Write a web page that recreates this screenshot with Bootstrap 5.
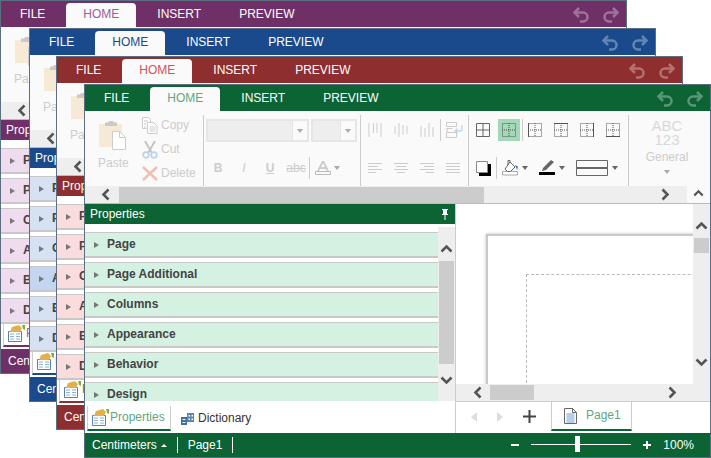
<!DOCTYPE html>
<html lang="en">
<head>
<meta charset="utf-8">
<title>Report designer themes</title>
<link rel="stylesheet" href="https://cdn.jsdelivr.net/npm/bootstrap@5.3.0/dist/css/bootstrap.min.css">
<style>
html,body{margin:0;width:711px;height:458px;overflow:hidden;background:#fff;font:12px/1.2 "Liberation Sans",Arial,sans-serif;color:#444}
svg{display:block;flex:none}
.th-purple{--tc:#6f3068;--ta:#9c5f96;--rw:#f0dcef;--rs:#e6c6e4}
.th-blue{--tc:#1a4a8c;--ta:#1a4a8c;--rw:#d6e1f3;--rs:#c3d6f1}
.th-red{--tc:#8f2e2f;--ta:#d4525a;--rw:#fbdcdc;--rs:#f8c8c8}
.th-green{--tc:#0c6435;--ta:#5fa683;--rw:#d5f1e2;--rs:#bde6cf}
.dsk{width:627px;height:374px;border:1px solid #5d6e80;background:#fff}
.dsk-a{left:0;top:0}.dsk-b{left:29px;top:28px}.dsk-c{left:56px;top:56px}.dsk-d{left:84px;top:84px}
.tbar{height:26px;background:var(--tc);color:#fff}
.tb-i{height:24px;margin-top:2px;line-height:23px;font-size:12px}
.tb-1{padding:0 21px 0 19px}
.tb-2{width:70px;text-align:center;background:#fafafa;color:var(--ta);border-radius:4px 4px 0 0}
.tb-3{padding:0 19px 0 21px}
.tb-4{padding:0 20px 0 19px}
.uhist{margin-right:6px;gap:14px;color:#fff;opacity:.32}
.rib{height:75px;background:#fafafa;color:#ccc}
.rgrp{height:71px;margin-top:4px;border-right:1px solid #ccc;flex:none}
.g-clip{width:119px}.g-font{width:157px}.g-al{width:108px;padding-left:1px}.g-bd{width:160px;padding-left:1px}.g-num{width:76px;border:0}
.pastec{width:55px;padding:6px 0 0 14px}
.pastec span{display:block;margin:6px 0 0 -1px}
.smalls{padding-top:2px;gap:7px;margin-left:2px}
.smalls>div{height:17px;gap:3px}
.rrow{height:22px}
.rr-1{margin-top:4px}.rr-2{margin-top:16px}
.rr-p{padding-left:1px}
.cmb{height:23px;background:#eee;border:2px solid #e6e6e6;justify-content:flex-end}
.cmb i{display:flex;align-items:center;justify-content:center;width:15px;height:100%;background:#fafafa;border-left:1px solid #e6e6e6}
.cw-1{width:103px;margin-left:2px}.cw-2{width:46px;margin-left:2px}
.cell{width:26px;height:22px;flex:none;display:flex;align-items:center;justify-content:center}
.fmt{font:bold 12px/1 "Liberation Sans",Arial,sans-serif}
.vsep{width:1px;height:22px;background:#ccc;flex:none}
.vneg{margin-right:-1px}
.hot{background:#a3d9b8;width:22px;margin:0 2px}
.caretd{width:0;height:0;border:3.500px solid transparent;border-top:4px solid #aaa;border-bottom:0;flex:none}
.caretk{border-top-color:#666;margin-left:4px}
.caretn{margin-left:-2px}
.gapl{margin-left:11px}
.gapf{margin-left:5px}
.abc{font-size:15px;line-height:14px;text-align:center;padding-top:4px;color:#d8d8d8}
.gen{font-size:12px;line-height:14px;margin-top:3px;text-align:center;color:#ccc}
.rsc{height:18px;background:#fafafa;border-bottom:1px solid #bbb}
.rtrack{width:602px;height:17px;background:#eee;padding:0 17px 0 16px}
.rthumb{width:365px;height:16px;background:#ccc;margin-left:9px}
.hdp{height:197px;width:371px;border-right:1px solid #ccc}
.hd-b{height:20px;background:var(--tc);color:#fff;padding:0 6px 0 5px}
.pbody{height:177px}
.plist{padding-top:8px;width:353px;gap:4px}
.prow{height:26px;flex:none;background:var(--rw);border-top:1px solid #c8c8c8;border-bottom:2px solid #c8c8c8;padding-left:9px;gap:8px;font-weight:bold;color:#444}
.prow-s{background:var(--rs)}
.tri{width:0;height:0;border:3.500px solid transparent;border-left:5px solid #777;border-right:0;flex:none}
.vbar{width:17px;margin-top:3px;background:#eee;padding-top:17px}
.vthumb{width:15px;height:103px;background:#ccc;margin:8px 0 12px 1px}
.fbar{height:32px}
.lp{width:371px;border-right:1px solid #ccc;padding-left:2px}
.ttab{height:25px;margin-top:5px;border-left:1px solid #ccc;border-right:1px solid #ccc;border-bottom:2px solid var(--tc);padding:0 4px;gap:1px;color:var(--ta);width:84px}
.ttab2{padding-left:10px;gap:4px;color:#333}
.stb{height:24px;background:var(--tc);color:#fff;padding-left:7px}
.ssep{width:1px;height:16px;background:#fff;flex:none}
.caretu{width:0;height:0;border:3px solid transparent;border-bottom:3px solid #fff;border-top:0;flex:none;margin:0 10px 0 4px}
.spg{padding:0 10px}
.szm{margin-right:16px}
.cvs{width:237px;height:180px;background:#fff}
.ppr{margin:30px 0 0 30px;width:260px;height:200px;border:solid #c8c8c8;border-width:2px 0 0 2px;box-shadow:0 0 3px #bbb;padding:38px 0 0 38px}
.pmrg{height:200px;border:1px dashed #bbb;border-width:1px 0 0 1px}
.sv{width:17px;height:197px;background:#eee}
.svu{margin:17px auto 0}
.svd{margin:105px auto 0}
.sh{height:17px;width:237px;background:#eee;padding:0 16px 0 17px}
.shthumb{width:44px;height:15px;background:#ccc;margin-left:8px}
.svthumb{width:15px;height:15px;background:#ccc;margin:8px 0 0 1px}
.rbtm{height:32px;border-top:1px solid #ccc}
.rnav{height:29px;width:95px;padding-left:15px}
.rnav-b{margin-left:20px}
.ptab{width:81px;height:29px;border:solid #ccc;border-width:0 1px 0 1px;border-bottom:2px solid var(--tc);padding-left:12px;gap:9px;color:var(--ta)}
.sld{width:100px;height:1px;background:#fff;margin:0 12px}
.sldk{width:5px;height:16px;background:#fff;margin-left:44px;margin-top:-8px}
.pct{margin-left:12px}
</style>
</head>
<body>
<svg width="0" height="0" class="position-absolute">
<symbol id="i-undo" viewBox="0 0 17 17"><path d="M7 2 2.500 6.500 7 11M3 6.500h8a4.300 4.300 0 0 1 0 9H8" fill="none" stroke="currentColor" stroke-width="2.500"/></symbol>
<symbol id="i-redo" viewBox="0 0 17 17"><path d="M10 2l4.500 4.500L10 11M14 6.500H6a4.300 4.300 0 0 0 0 9h3" fill="none" stroke="currentColor" stroke-width="2.500"/></symbol>
<symbol id="i-paste" viewBox="0 0 28 29"><path d="M0 3h23v23H0z" fill="#f6ead7"/><path d="M6 1.500h3l1-1.500h4l1 1.500h3V5H6z" fill="#c9c9c9"/><path d="M13.500 10.500h7l6 6v12h-13z" fill="#fff" stroke="#ccc"/><path d="M20.500 10.500v6h6" fill="none" stroke="#ccc"/></symbol>
<symbol id="i-copy" viewBox="0 0 16 17"><path d="M.500.500h6l2 2v3M.500.500v11h4" fill="#fff" stroke="#ccc"/><path d="M5.500 5.500h6l3.500 3.500v7.500H5.500z" fill="#fff" stroke="#ccc"/><path d="M2 4h4M2 7h2M2 10h2M7.500 10h6M7.500 12h6M7.500 14h6" stroke="#ccc"/></symbol>
<symbol id="i-cut" viewBox="0 0 16 18"><path d="M3 0l7 12M13 0L6 12" stroke="#c5c5c5" stroke-width="2" fill="none"/><circle cx="4" cy="14" r="2.800" fill="none" stroke="#bcd3ea" stroke-width="1.800"/><circle cx="12" cy="14" r="2.800" fill="none" stroke="#bcd3ea" stroke-width="1.800"/></symbol>
<symbol id="i-del" viewBox="0 0 16 15"><path d="M1 1l14 13M15 1L1 14" stroke="#f2bcb2" stroke-width="2.400" fill="none"/></symbol>
<symbol id="i-vt" viewBox="0 0 14 14"><path d="M1 0v14M5.500 0v10M9 0v10M13 0v14" stroke="#ccc"/></symbol>
<symbol id="i-vm" viewBox="0 0 14 14"><path d="M1 3v8M5 0v14M9 2v10M13 3v8" stroke="#ccc"/></symbol>
<symbol id="i-vb" viewBox="0 0 14 14"><path d="M1 3v11M5 5v9M9 0v14M13 4v10" stroke="#ccc"/></symbol>
<symbol id="i-wrap" viewBox="0 0 17 16"><path d="M.500.500h10v4H.500zM.500 6.500h6M.500 10.500h10v5H.500z" fill="none" stroke="#ccc"/><path d="M1 6v4M16 3v3.500a2.500 2.500 0 0 1-2.500 2.500H9M11.500 6.500 9 9l2.500 2.500" fill="none" stroke="#bfd4ea" stroke-width="1.300"/></symbol>
<symbol id="i-al" viewBox="0 0 14 11"><path d="M0 .500h14M0 3.500h10M0 6.500h14M0 9.500h8" stroke="#ccc"/></symbol>
<symbol id="i-ac" viewBox="0 0 14 11"><path d="M0 .500h14M2 3.500h10M0 6.500h14M3 9.500h8" stroke="#ccc"/></symbol>
<symbol id="i-ar" viewBox="0 0 14 11"><path d="M0 .500h14M4 3.500h10M0 6.500h14M6 9.500h8" stroke="#ccc"/></symbol>
<symbol id="i-aj" viewBox="0 0 14 11"><path d="M0 .500h14M0 3.500h14M0 6.500h14M0 9.500h14" stroke="#ccc"/></symbol>
<symbol id="i-bdall" viewBox="0 0 14 14"><path d="M.500.500h13v13H.500zM7 0v14M0 7h14" fill="none" stroke="#666"/></symbol>
<symbol id="i-bddot" viewBox="0 0 14 14"><path d="M.500.500h13v13H.500zM7 0v14M0 7h14" fill="none" stroke="#555" stroke-dasharray="1 1"/></symbol>
<symbol id="i-bdl" viewBox="0 0 14 14"><path d="M.500.500h13v13H.500zM7 0v14M0 7h14" fill="none" stroke="#555" stroke-dasharray="1 1"/><path d="M.500 0v14" stroke="#555"/></symbol>
<symbol id="i-bdt" viewBox="0 0 14 14"><path d="M.500.500h13v13H.500zM7 0v14M0 7h14" fill="none" stroke="#555" stroke-dasharray="1 1"/><path d="M0 .500h14" stroke="#555"/></symbol>
<symbol id="i-bdr" viewBox="0 0 14 14"><path d="M.500.500h13v13H.500zM7 0v14M0 7h14" fill="none" stroke="#555" stroke-dasharray="1 1"/><path d="M13.500 0v14" stroke="#555"/></symbol>
<symbol id="i-bdb" viewBox="0 0 14 14"><path d="M.500.500h13v13H.500zM7 0v14M0 7h14" fill="none" stroke="#555" stroke-dasharray="1 1"/><path d="M0 13.500h14" stroke="#555"/></symbol>
<symbol id="i-txa" viewBox="0 0 16 14"><path d="M3 10 8 0l5 10M5 7h6" fill="none" stroke="#ccc" stroke-width="1.800"/><path d="M.500 10.500h15v3H.500z" fill="none" stroke="#bbb"/></symbol>
<symbol id="i-sq" viewBox="0 0 15 15"><path d="M3 3h12v12H3z" fill="#000"/><path d="M.500.500h11v11H.500z" fill="#fff" stroke="#888"/></symbol>
<symbol id="i-fill" viewBox="0 0 16 16"><path d="M.500 11.500h15v3.500H.500z" fill="#fff" stroke="#aaa"/><path d="M8 2l5 5-4.500 4.500h-3L3 9z" fill="#fff" stroke="#666"/><path d="M6 5V.500h2V3" fill="none" stroke="#666"/><path d="M13 5l3 1.500-1 3.500z" fill="#3a7cbf"/></symbol>
<symbol id="i-pen" viewBox="0 0 16 16"><path d="M0 12h16v3H0z" fill="#000"/><path d="M3 11l1-3 8-8 3 2-8 8z" fill="#666"/></symbol>
<symbol id="i-line" viewBox="0 0 32 16"><path d="M.500.500h31v15H.500z" fill="none" stroke="#666"/><path d="M0 7h32v2H0z" fill="#666"/></symbol>
<symbol id="i-up" viewBox="0 0 13 9"><path d="M1.500 7.500l5-5 5 5" fill="none" stroke="#555" stroke-width="2.600"/></symbol>
<symbol id="i-dn" viewBox="0 0 13 9"><path d="M1.500 1.500l5 5 5-5" fill="none" stroke="#555" stroke-width="2.600"/></symbol>
<symbol id="i-lf" viewBox="0 0 9 13"><path d="M7.500 1.500l-5 5 5 5" fill="none" stroke="#555" stroke-width="2.600"/></symbol>
<symbol id="i-rt" viewBox="0 0 9 13"><path d="M1.500 1.500l5 5-5 5" fill="none" stroke="#555" stroke-width="2.600"/></symbol>
<symbol id="i-pin" viewBox="0 0 8 11"><path d="M1 0h6v1H6v4h1v1H4.500v5h-1V6H1V5h1V1H1z" fill="#fff"/></symbol>
<symbol id="i-prop" viewBox="0 0 17 17"><path d="M.500 6.500h13v10H.500z" fill="#fff" stroke="#5f7fa5"/><path d="M2 9h4M8 9h4M2 11.500h4M8 11.500h4M2 14h4M8 14h4" stroke="#8ab0d6"/><path d="M2 7l2-5 7-2 3 3-2 4z" fill="#e3b04b"/><path d="M14 0h3v5l-2-1z" fill="#7bb342"/></symbol>
<symbol id="i-dict" viewBox="0 0 13 12"><path d="M0 4h6v8H0z" fill="#3a6ea5"/><path d="M6 0h7v9H6z" fill="#5c85b0"/><path d="M1.500 6h3v1h-3zM1.500 9h3v1h-3zM7.500 2h1.500v1.500H7.500zM10.500 2H12v1.500h-1.500zM7.500 5.500h1.500V7H7.500zM10.500 5.500H12V7h-1.500z" fill="#fff"/></symbol>
<symbol id="i-doc" viewBox="0 0 13 16"><path d="M.500.500h8l4 4v11H.500z" fill="#fff" stroke="#666"/><path d="M8.500.500v4h4" fill="none" stroke="#666"/><path d="M2.500 6h8M2.500 8h8M2.500 10h8M2.500 12h8M2.500 14h8" stroke="#6d9ad6"/></symbol>
</svg>

<div class="dsk dsk-a th-purple position-absolute overflow-hidden">
  <div class="tbar d-flex">
    <div class="tb-i tb-1">FILE</div><div class="tb-i tb-2">HOME</div><div class="tb-i tb-3">INSERT</div><div class="tb-i tb-4">PREVIEW</div>
    <div class="uhist d-flex align-items-center ms-auto"><svg width="17" height="17"><use href="#i-undo"/></svg><svg width="17" height="17"><use href="#i-redo"/></svg></div>
  </div>
  <div class="rib d-flex"><div class="rgrp g-clip d-flex"><div class="pastec"><svg width="28" height="29"><use href="#i-paste"/></svg><span>Paste</span></div></div></div>
  <div class="rsc d-flex"><div class="rtrack d-flex align-items-center"><svg width="9" height="13"><use href="#i-lf"/></svg></div></div>
  <div class="hdp">
    <div class="hd-b d-flex align-items-center">Properties</div>
    <div class="plist d-flex flex-column">
      <div class="prow d-flex align-items-center"><i class="tri"></i>Page</div>
      <div class="prow d-flex align-items-center"><i class="tri"></i>Page Additional</div>
      <div class="prow d-flex align-items-center"><i class="tri"></i>Columns</div>
      <div class="prow d-flex align-items-center"><i class="tri"></i>Appearance</div>
      <div class="prow d-flex align-items-center"><i class="tri"></i>Behavior</div>
      <div class="prow d-flex align-items-center"><i class="tri"></i>Design</div>
    </div>
  </div>
  <div class="fbar d-flex"><div class="lp d-flex"><div class="ttab d-flex align-items-center"><svg width="17" height="17"><use href="#i-prop"/></svg>Properties</div></div></div>
  <div class="stb d-flex align-items-center">Centimeters</div>
</div>

<div class="dsk dsk-b th-blue position-absolute overflow-hidden">
  <div class="tbar d-flex">
    <div class="tb-i tb-1">FILE</div><div class="tb-i tb-2">HOME</div><div class="tb-i tb-3">INSERT</div><div class="tb-i tb-4">PREVIEW</div>
    <div class="uhist d-flex align-items-center ms-auto"><svg width="17" height="17"><use href="#i-undo"/></svg><svg width="17" height="17"><use href="#i-redo"/></svg></div>
  </div>
  <div class="rib d-flex"><div class="rgrp g-clip d-flex"><div class="pastec"><svg width="28" height="29"><use href="#i-paste"/></svg><span>Paste</span></div></div></div>
  <div class="rsc d-flex"><div class="rtrack d-flex align-items-center"><svg width="9" height="13"><use href="#i-lf"/></svg></div></div>
  <div class="hdp">
    <div class="hd-b d-flex align-items-center">Properties</div>
    <div class="plist d-flex flex-column">
      <div class="prow d-flex align-items-center"><i class="tri"></i>Page</div>
      <div class="prow d-flex align-items-center"><i class="tri"></i>Page Additional</div>
      <div class="prow d-flex align-items-center"><i class="tri"></i>Columns</div>
      <div class="prow prow-s d-flex align-items-center"><i class="tri"></i>Appearance</div>
      <div class="prow d-flex align-items-center"><i class="tri"></i>Behavior</div>
      <div class="prow d-flex align-items-center"><i class="tri"></i>Design</div>
    </div>
  </div>
  <div class="fbar d-flex"><div class="lp d-flex"><div class="ttab d-flex align-items-center"><svg width="17" height="17"><use href="#i-prop"/></svg>Properties</div></div></div>
  <div class="stb d-flex align-items-center">Centimeters</div>
</div>

<div class="dsk dsk-c th-red position-absolute overflow-hidden">
  <div class="tbar d-flex">
    <div class="tb-i tb-1">FILE</div><div class="tb-i tb-2">HOME</div><div class="tb-i tb-3">INSERT</div><div class="tb-i tb-4">PREVIEW</div>
    <div class="uhist d-flex align-items-center ms-auto"><svg width="17" height="17"><use href="#i-undo"/></svg><svg width="17" height="17"><use href="#i-redo"/></svg></div>
  </div>
  <div class="rib d-flex"><div class="rgrp g-clip d-flex"><div class="pastec"><svg width="28" height="29"><use href="#i-paste"/></svg><span>Paste</span></div></div></div>
  <div class="rsc d-flex"><div class="rtrack d-flex align-items-center"><svg width="9" height="13"><use href="#i-lf"/></svg></div></div>
  <div class="hdp">
    <div class="hd-b d-flex align-items-center">Properties</div>
    <div class="plist d-flex flex-column">
      <div class="prow d-flex align-items-center"><i class="tri"></i>Page</div>
      <div class="prow d-flex align-items-center"><i class="tri"></i>Page Additional</div>
      <div class="prow d-flex align-items-center"><i class="tri"></i>Columns</div>
      <div class="prow d-flex align-items-center"><i class="tri"></i>Appearance</div>
      <div class="prow d-flex align-items-center"><i class="tri"></i>Behavior</div>
      <div class="prow d-flex align-items-center"><i class="tri"></i>Design</div>
    </div>
  </div>
  <div class="fbar d-flex"><div class="lp d-flex"><div class="ttab d-flex align-items-center"><svg width="17" height="17"><use href="#i-prop"/></svg>Properties</div></div></div>
  <div class="stb d-flex align-items-center">Centimeters</div>
</div>

<div class="dsk dsk-d th-green position-absolute overflow-hidden">
  <div class="tbar d-flex">
    <div class="tb-i tb-1">FILE</div><div class="tb-i tb-2">HOME</div><div class="tb-i tb-3">INSERT</div><div class="tb-i tb-4">PREVIEW</div>
    <div class="uhist d-flex align-items-center ms-auto"><svg width="17" height="17"><use href="#i-undo"/></svg><svg width="17" height="17"><use href="#i-redo"/></svg></div>
  </div>
  <div class="rib d-flex">
    <div class="rgrp g-clip d-flex">
      <div class="pastec"><svg width="28" height="29"><use href="#i-paste"/></svg><span>Paste</span></div>
      <div class="smalls d-flex flex-column">
        <div class="d-flex align-items-center"><svg width="16" height="17"><use href="#i-copy"/></svg>Copy</div>
        <div class="d-flex align-items-center"><svg width="16" height="18"><use href="#i-cut"/></svg>Cut</div>
        <div class="d-flex align-items-center"><svg width="16" height="15"><use href="#i-del"/></svg>Delete</div>
      </div>
    </div>
    <div class="rgrp g-font">
      <div class="rrow rr-1 d-flex"><div class="cmb cw-1 d-flex"><i><b class="caretd"></b></i></div><div class="cmb cw-2 d-flex"><i><b class="caretd"></b></i></div></div>
      <div class="rrow rr-2 rr-p d-flex align-items-center">
        <div class="cell fmt">B</div><div class="cell fmt fst-italic fw-normal">I</div><div class="cell fmt text-decoration-underline">U</div><div class="cell"><s>abc</s></div>
        <div class="vsep"></div>
        <div class="cell"><svg width="16" height="14"><use href="#i-txa"/></svg></div><i class="caretd caretn"></i>
      </div>
    </div>
    <div class="rgrp g-al">
      <div class="rrow rr-1 d-flex align-items-center">
        <div class="cell"><svg width="14" height="14"><use href="#i-vt"/></svg></div><div class="cell"><svg width="14" height="14"><use href="#i-vm"/></svg></div><div class="cell"><svg width="14" height="14"><use href="#i-vb"/></svg></div>
        <div class="vsep"></div>
        <div class="cell"><svg width="17" height="16"><use href="#i-wrap"/></svg></div>
      </div>
      <div class="rrow rr-2 d-flex align-items-center">
        <div class="cell"><svg width="14" height="11"><use href="#i-al"/></svg></div><div class="cell"><svg width="14" height="11"><use href="#i-ac"/></svg></div><div class="cell"><svg width="14" height="11"><use href="#i-ar"/></svg></div><div class="cell"><svg width="14" height="11"><use href="#i-aj"/></svg></div>
      </div>
    </div>
    <div class="rgrp g-bd">
      <div class="rrow rr-1 d-flex align-items-center">
        <div class="cell"><svg width="14" height="14"><use href="#i-bdall"/></svg></div>
        <div class="cell hot"><svg width="14" height="14"><use href="#i-bddot"/></svg></div>
        <div class="vsep vneg"></div>
        <div class="cell"><svg width="14" height="14"><use href="#i-bdl"/></svg></div><div class="cell"><svg width="14" height="14"><use href="#i-bdt"/></svg></div><div class="cell"><svg width="14" height="14"><use href="#i-bdr"/></svg></div><div class="cell"><svg width="14" height="14"><use href="#i-bdb"/></svg></div>
      </div>
      <div class="rrow rr-2 d-flex align-items-center">
        <div class="cell"><svg width="15" height="15"><use href="#i-sq"/></svg></div>
        <div class="vsep"></div>
        <svg width="16" height="16" class="gapf"><use href="#i-fill"/></svg><i class="caretd caretk"></i>
        <svg width="16" height="16" class="gapl"><use href="#i-pen"/></svg><i class="caretd caretk"></i>
        <svg width="32" height="16" class="gapl"><use href="#i-line"/></svg><i class="caretd caretk"></i>
      </div>
    </div>
    <div class="rgrp g-num">
      <div class="abc">ABC<br>123</div>
      <div class="gen">General</div>
      <i class="caretd d-block mx-auto mt-2"></i>
    </div>
  </div>
  <div class="rsc d-flex">
    <div class="rtrack d-flex align-items-center"><svg width="9" height="13"><use href="#i-lf"/></svg><div class="rthumb me-auto"></div><svg width="9" height="13"><use href="#i-rt"/></svg></div>
    <div class="flex-grow-1 d-flex justify-content-center pt-1"><svg width="11" height="8"><use href="#i-up"/></svg></div>
  </div>
  <div class="d-flex">
    <div class="hdp">
      <div class="hd-b d-flex align-items-center justify-content-between">Properties<svg width="8" height="11"><use href="#i-pin"/></svg></div>
      <div class="pbody d-flex">
        <div class="plist d-flex flex-column overflow-hidden">
          <div class="prow d-flex align-items-center"><i class="tri"></i>Page</div>
          <div class="prow d-flex align-items-center"><i class="tri"></i>Page Additional</div>
          <div class="prow d-flex align-items-center"><i class="tri"></i>Columns</div>
          <div class="prow d-flex align-items-center"><i class="tri"></i>Appearance</div>
          <div class="prow d-flex align-items-center"><i class="tri"></i>Behavior</div>
          <div class="prow d-flex align-items-center"><i class="tri"></i>Design</div>
        </div>
        <div class="vbar">
          <svg width="13" height="9" class="mx-auto"><use href="#i-up"/></svg>
          <div class="vthumb"></div>
          <svg width="13" height="9" class="mx-auto"><use href="#i-dn"/></svg>
        </div>
      </div>
    </div>
    <div class="flex-grow-1 d-flex">
      <div>
        <div class="cvs overflow-hidden"><div class="ppr"><div class="pmrg"></div></div></div>
        <div class="sh d-flex align-items-center">
          <svg width="9" height="13"><use href="#i-lf"/></svg>
          <div class="shthumb"></div>
          <svg width="9" height="13" class="ms-auto"><use href="#i-rt"/></svg>
        </div>
      </div>
      <div class="sv">
        <svg width="13" height="9" class="svu"><use href="#i-up"/></svg>
        <div class="svthumb"></div>
        <svg width="13" height="9" class="svd"><use href="#i-dn"/></svg>
      </div>
    </div>
  </div>
  <div class="fbar d-flex">
    <div class="lp d-flex">
      <div class="ttab d-flex align-items-center"><svg width="17" height="17"><use href="#i-prop"/></svg>Properties</div>
      <div class="ttab ttab2 d-flex align-items-center border-0"><svg width="13" height="12"><use href="#i-dict"/></svg>Dictionary</div>
    </div>
    <div class="rbtm flex-grow-1 d-flex align-items-start">
      <div class="rnav d-flex align-items-center">
        <svg width="6" height="10"><path d="M6 0 0 5l6 5z" fill="#ddd"/></svg>
        <svg width="6" height="10" class="rnav-b"><path d="M0 0l6 5-6 5z" fill="#ddd"/></svg>
        <svg width="13" height="13" class="rnav-b"><path d="M6.500 0v13M0 6.500h13" stroke="#444" stroke-width="2"/></svg>
      </div>
      <div class="ptab d-flex align-items-center"><svg width="13" height="16"><use href="#i-doc"/></svg>Page1</div>
    </div>
  </div>
  <div class="stb d-flex align-items-center">
    Centimeters<i class="caretu"></i><div class="ssep"></div>
    <span class="spg">Page1</span><div class="ssep"></div>
    <div class="szm d-flex align-items-center ms-auto">
      <svg width="8" height="2"><path d="M0 0h8v2H0z" fill="#fff"/></svg>
      <div class="sld"><div class="sldk"></div></div>
      <svg width="8" height="8"><path d="M3 0h2v3h3v2H5v3H3V5H0V3h3z" fill="#fff"/></svg>
      <span class="pct">100%</span>
    </div>
  </div>
</div>
</body>
</html>
